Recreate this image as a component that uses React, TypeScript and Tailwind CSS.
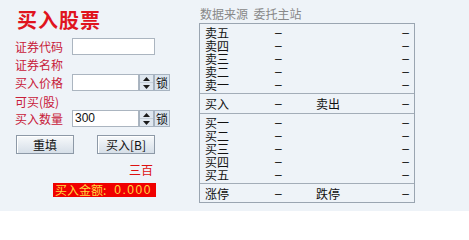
import React from "react";

const Spinner = () => (
  <div className="w-[15px] h-[17px] border border-[#a7b3c0] bg-[#dfe7ef] flex flex-col">
    <div className="flex-1 flex items-center justify-center border-b border-[#c4ced8]">
      <svg width="7" height="4" viewBox="0 0 7 4"><polygon points="3.5,0 7,4 0,4" fill="#1a1a1a" /></svg>
    </div>
    <div className="flex-1 flex items-center justify-center">
      <svg width="7" height="4" viewBox="0 0 7 4"><polygon points="0,0 7,0 3.5,4" fill="#1a1a1a" /></svg>
    </div>
  </div>
);

const Lock = () => (
  <div className="w-[16px] h-[17px] border border-[#a7b3c0] bg-[#dae4ee] flex items-center justify-center text-[12px] leading-[15px] text-[#111]">
    锁
  </div>
);

const Row = ({ label, children, h = "h-[17px]", mt = "" }: { label: string; children?: React.ReactNode; h?: string; mt?: string }) => (
  <div className={`flex items-center ${h} ${mt}`}>
    <div className="w-[57px] text-[12px] leading-[14px] text-[#c8203a] whitespace-nowrap">{label}</div>
    {children}
  </div>
);

const Dash = () => <span className="font-['Liberation_Sans',sans-serif] text-[12px]">–</span>;

const QRow = ({ label }: { label: string }) => (
  <div className="flex items-center h-[13px] text-[12px] leading-[13px] text-[#111]">
    <div className="w-[70px]">{label}</div>
    <div className="w-[41px]"><Dash /></div>
    <div className="flex-1" />
    <div><Dash /></div>
  </div>
);

const MidRow = ({ a, b, h, last = false }: { a: string; b: string; h: string; last?: boolean }) => (
  <div className={`flex items-center ${h} px-[5px] pr-[5px] text-[12px] leading-[13px] text-[#111] ${last ? "" : "border-b border-[#a3adb8]"}`}>
    <div className="w-[70px]">{a}</div>
    <div className="w-[41px]"><Dash /></div>
    <div className="flex-1">{b}</div>
    <div><Dash /></div>
  </div>
);

export default function App() {
  return (
    <div className="w-[469px] h-[211px] bg-[#eef3f8] flex font-['Noto_Sans_CJK_SC',sans-serif] overflow-hidden">
      {/* Left */}
      <div className="w-[199px] pl-[15px] pt-[7px] flex flex-col">
        <div className="h-[26px] leading-[26px] text-[20px] font-bold text-[#e0141e] pl-[2px] tracking-[1px]">买入股票</div>
        <Row label="证券代码" mt="mt-[5px]">
          <div className="w-[83px] h-[17px] bg-white border border-[#abb5c0]" />
        </Row>
        <Row label="证券名称" h="h-[16px]" mt="mt-[2px]" />
        <Row label="买入价格" mt="mt-[1px]">
          <div className="w-[67px] h-[17px] bg-white border border-[#abb5c0]" />
          <Spinner />
          <Lock />
        </Row>
        <Row label="可买(股)" mt="mt-[2px]" />
        <Row label="买入数量">
          <div className="w-[67px] h-[17px] bg-white border border-[#abb5c0] text-[12px] leading-[15px] pl-[2px] text-[#111] font-['Liberation_Sans',sans-serif]">300</div>
          <Spinner />
          <Lock />
        </Row>
        <div className="flex mt-[8px] h-[19px] pl-[1px] gap-[23px]">
          <button className="w-[58px] h-[19px] border border-[#8d99a7] bg-gradient-to-b from-[#f7f9fb] to-[#d6dfe8] text-[12px] leading-[15px] text-[#111] shadow-[inset_1px_1px_0_#ffffff]">重填</button>
          <button className="w-[58px] h-[19px] border border-[#8d99a7] bg-gradient-to-b from-[#f7f9fb] to-[#d6dfe8] text-[12px] leading-[15px] text-[#111] shadow-[inset_1px_1px_0_#ffffff]">买入[B]</button>
        </div>
        <div className="w-[141px] mt-[8px] h-[16px] text-right pr-[3px] text-[12px] leading-[16px] text-[#dd1111]">三百</div>
        <div className="mt-[5px] ml-[38px] w-[103px] h-[14px] bg-[#f00000] text-[#ffd940] text-[12px] leading-[14px] pl-[2px] whitespace-nowrap flex">
          <span>买入金额:</span>
          <span className="ml-[8px] tracking-[1.5px] font-['Liberation_Sans',sans-serif]">0.000</span>
        </div>
      </div>
      {/* Right */}
      <div className="flex flex-col pt-[6px]">
        <div className="h-[16px] text-[12px] leading-[16px] text-[#888888] pl-[1px] whitespace-nowrap">数据来源&nbsp;&nbsp;委托主站</div>
        <div className="mt-[1px] w-[216px] h-[180px] border border-[#9aa5b1] flex flex-col">
          <div className="h-[70px] pt-[2px] px-[5px] border-b border-[#a3adb8]">
            <QRow label="卖五" />
            <QRow label="卖四" />
            <QRow label="卖三" />
            <QRow label="卖二" />
            <QRow label="卖一" />
          </div>
          <MidRow a="买入" b="卖出" h="h-[20px]" />
          <div className="h-[70px] pt-[2px] px-[5px] border-b border-[#a3adb8]">
            <QRow label="买一" />
            <QRow label="买二" />
            <QRow label="买三" />
            <QRow label="买四" />
            <QRow label="买五" />
          </div>
          <MidRow a="涨停" b="跌停" h="h-[18px]" last />
        </div>
      </div>
    </div>
  );
}
